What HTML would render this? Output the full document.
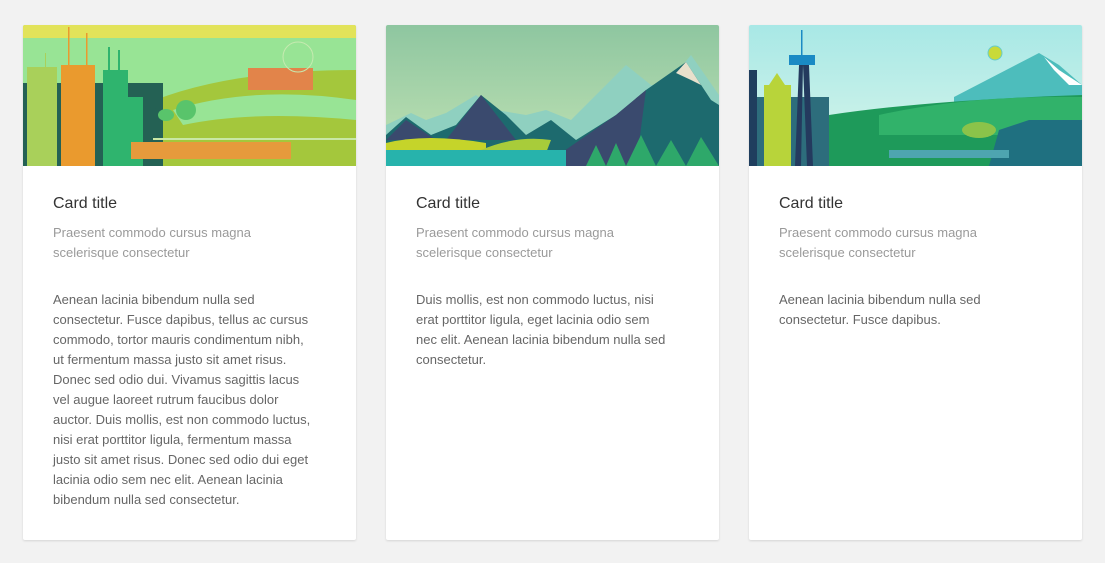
<!DOCTYPE html>
<html><head><meta charset="utf-8"><style>
body{margin:0;background:#f2f2f2;width:1105px;height:563px;overflow:hidden;font-family:"Liberation Sans",sans-serif}
.card{position:absolute;top:25px;width:333px;height:515px;background:#fff;box-shadow:0 1px 2px rgba(0,0,0,.12);border-radius:2px;overflow:hidden}
.card svg{display:block;width:333px;height:141px}
.t{position:absolute;left:30px;top:169px;font-size:16px;color:#333;line-height:20px;white-space:nowrap}
.s{position:absolute;left:30px;top:198px;font-size:13px;color:#9a9a9a;line-height:20px;white-space:nowrap}
.b{position:absolute;left:30px;top:265px;font-size:13px;color:#666;line-height:20px;white-space:nowrap}
</style></head><body>
<div class="card" style="left:23px">
<svg viewBox="0 0 333 141">
<rect width="333" height="141" fill="#98e495"/>
<rect width="333" height="13" fill="#e2e35a"/>
<path d="M120 80 Q200 45 333 45 L333 141 L120 141Z" fill="#a4c73c"/>
<path d="M150 85 Q230 60 333 75 L333 95 Q230 85 160 100Z" fill="#98e495"/>
<rect x="0" y="58" width="140" height="83" fill="#246154"/>
<path d="M105 78 L140 85 L140 141 L105 141Z" fill="#246154"/>
<rect x="4" y="42" width="30" height="99" fill="#a9d05a"/>
<rect x="22" y="28" width="1" height="14" fill="#a9d05a"/>
<rect x="38" y="40" width="34" height="101" fill="#ea9a2e"/>
<rect x="45" y="2" width="1.5" height="38" fill="#ea9a2e"/><rect x="63" y="8" width="1.5" height="32" fill="#ea9a2e"/>
<rect x="80" y="45" width="25" height="96" fill="#2fb46e"/>
<rect x="85" y="22" width="2" height="25" fill="#2fb46e"/><rect x="95" y="25" width="2" height="22" fill="#2fb46e"/>
<rect x="105" y="72" width="15" height="69" fill="#2fb46e"/>
<rect x="108" y="117" width="160" height="17" fill="#e69a3c"/>
<rect x="225" y="43" width="65" height="22" fill="#e2844a"/>
<circle cx="275" cy="32" r="15" fill="none" stroke="#c6eab0" stroke-width="1"/>
<circle cx="163" cy="85" r="10" fill="#59c46b"/>
<ellipse cx="143" cy="90" rx="8" ry="6" fill="#59c46b"/>
<rect x="130" y="113" width="203" height="2" fill="#c9e8a5"/>
</svg>
<div class="t">Card title</div>
<div class="s">Praesent commodo cursus magna<br>scelerisque consectetur</div>
<div class="b">Aenean lacinia bibendum nulla sed<br>consectetur. Fusce dapibus, tellus ac cursus<br>commodo, tortor mauris condimentum nibh,<br>ut fermentum massa justo sit amet risus.<br>Donec sed odio dui. Vivamus sagittis lacus<br>vel augue laoreet rutrum faucibus dolor<br>auctor. Duis mollis, est non commodo luctus,<br>nisi erat porttitor ligula, fermentum massa<br>justo sit amet risus. Donec sed odio dui eget<br>lacinia odio sem nec elit. Aenean lacinia<br>bibendum nulla sed consectetur.</div>
</div>
<div class="card" style="left:386px">
<svg viewBox="0 0 333 141">
<defs><linearGradient id="g2" x1="0" y1="0" x2="0" y2="1"><stop offset="0" stop-color="#8ec6a0"/><stop offset="1" stop-color="#c2e3b4"/></linearGradient></defs>
<rect width="333" height="141" fill="url(#g2)"/>
<path d="M0 100 L25 88 L40 95 L60 88 L90 70 L110 85 L140 90 L160 85 L185 95 L210 70 L240 40 L265 60 L280 60 L305 30 L333 70 L333 141 L0 141Z" fill="#8fd0c0"/>
<path d="M0 110 L20 92 L45 110 L70 100 L95 70 L120 90 L140 110 L165 95 L190 115 L230 90 L260 65 L300 37 L325 75 L333 80 L333 141 L0 141Z" fill="#1d6a6e"/>
<path d="M0 115 L20 95 L50 115Z M60 115 L95 70 L130 115Z M165 135 L230 90 L260 65 L250 141 L160 141Z" fill="#3a4a6e"/>
<path d="M0 118 Q40 108 100 118 L100 128 L0 128Z" fill="#c5d42a"/>
<path d="M95 125 Q130 110 165 115 L160 128 L95 128Z" fill="#a8cc3a"/>
<rect x="0" y="125" width="180" height="16" fill="#27b3ac"/>
<path d="M290 48 L300 37 L315 60 L305 55Z" fill="#e8e0cc"/>
<path d="M200 141 L210 120 L220 141 L230 118 L240 141 L255 110 L270 141 L285 115 L300 141 L315 112 L333 141Z" fill="#2ea86a"/>
</svg>
<div class="t">Card title</div>
<div class="s">Praesent commodo cursus magna<br>scelerisque consectetur</div>
<div class="b">Duis mollis, est non commodo luctus, nisi<br>erat porttitor ligula, eget lacinia odio sem<br>nec elit. Aenean lacinia bibendum nulla sed<br>consectetur.</div>
</div>
<div class="card" style="left:749px">
<svg viewBox="0 0 333 141">
<defs><linearGradient id="g3" x1="0" y1="0" x2="0" y2="1"><stop offset="0" stop-color="#a8e8e6"/><stop offset="1" stop-color="#d8f5ea"/></linearGradient></defs>
<rect width="333" height="141" fill="url(#g3)"/>
<path d="M205 72 L290 28 L310 40 L333 60 L333 80 L205 80Z" fill="#4dbdbc"/>
<path d="M295 32 L310 45 L333 60 L320 60 L305 45Z" fill="#fff"/>
<path d="M80 90 Q180 75 333 70 L333 141 L80 141Z" fill="#1e9a5a"/>
<path d="M130 90 Q220 70 333 72 L333 110 L130 110Z" fill="#31b26a"/>
<rect x="0" y="72" width="80" height="69" fill="#2d6d7c"/>
<rect x="0" y="45" width="8" height="96" fill="#1f3e5e"/>
<rect x="15" y="60" width="27" height="81" fill="#b8d43a"/>
<path d="M20 60 L28 48 L36 60Z" fill="#b8d43a"/>
<rect x="40" y="30" width="26" height="10" fill="#1a8ac4"/>
<path d="M50 40 L46 141 L52 141 L54 40 L58 141 L64 141 L60 40Z" fill="#243a5e"/>
<rect x="52" y="5" width="1.5" height="25" fill="#1a8ac4"/>
<circle cx="246" cy="28" r="7" fill="#c8da3a" stroke="#6cc" stroke-width="1"/>
<path d="M250 105 L280 95 L333 95 L333 141 L240 141Z" fill="#1f7080"/>
<rect x="140" y="125" width="120" height="8" fill="#4ea5b0"/>
<ellipse cx="230" cy="105" rx="17" ry="8" fill="#8bc34a"/>
</svg>
<div class="t">Card title</div>
<div class="s">Praesent commodo cursus magna<br>scelerisque consectetur</div>
<div class="b">Aenean lacinia bibendum nulla sed<br>consectetur. Fusce dapibus.</div>
</div>
</body></html>
